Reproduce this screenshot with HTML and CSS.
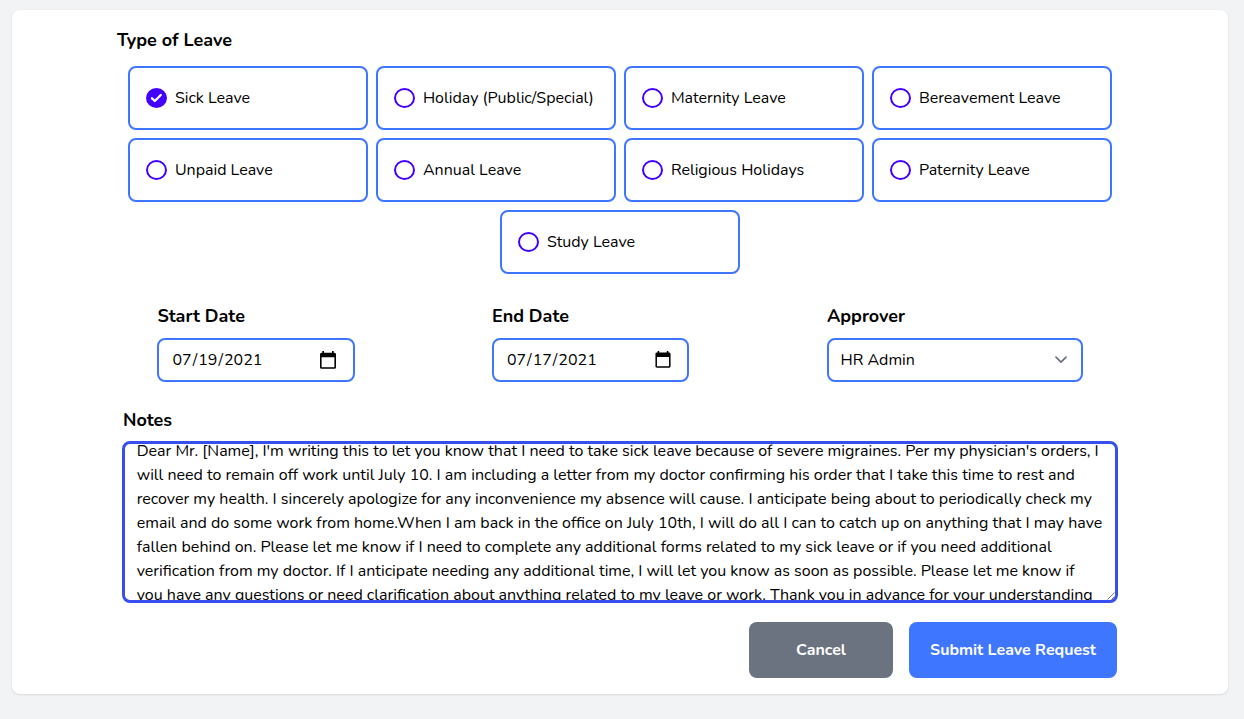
FILE: index.html
```html
<!DOCTYPE html>
<html lang="en">
<head>
<meta charset="utf-8">
<title>Leave Request</title>
<link rel="stylesheet" href="styles.css">
</head>
<body>
<main class="card">
  <h2 class="heading type-heading">Type of Leave</h2>
  <div class="options">
    <label class="option"><svg class="radio" viewBox="0 0 21 20"><ellipse cx="10.5" cy="10" rx="10.5" ry="10" fill="#4200ff"/><path d="M6 10.3l2.8 2.7 6-6" fill="none" stroke="#fff" stroke-width="2.3" stroke-linecap="round" stroke-linejoin="round"/></svg><span>Sick Leave</span></label>
    <label class="option"><svg class="radio" viewBox="0 0 21 20"><ellipse class="ring" cx="10.5" cy="10" rx="9.5" ry="9"/></svg><span>Holiday (Public/Special)</span></label>
    <label class="option"><svg class="radio" viewBox="0 0 21 20"><ellipse class="ring" cx="10.5" cy="10" rx="9.5" ry="9"/></svg><span>Maternity Leave</span></label>
    <label class="option"><svg class="radio" viewBox="0 0 21 20"><ellipse class="ring" cx="10.5" cy="10" rx="9.5" ry="9"/></svg><span>Bereavement Leave</span></label>
    <label class="option"><svg class="radio" viewBox="0 0 21 20"><ellipse class="ring" cx="10.5" cy="10" rx="9.5" ry="9"/></svg><span>Unpaid Leave</span></label>
    <label class="option"><svg class="radio" viewBox="0 0 21 20"><ellipse class="ring" cx="10.5" cy="10" rx="9.5" ry="9"/></svg><span>Annual Leave</span></label>
    <label class="option"><svg class="radio" viewBox="0 0 21 20"><ellipse class="ring" cx="10.5" cy="10" rx="9.5" ry="9"/></svg><span>Religious Holidays</span></label>
    <label class="option"><svg class="radio" viewBox="0 0 21 20"><ellipse class="ring" cx="10.5" cy="10" rx="9.5" ry="9"/></svg><span>Paternity Leave</span></label>
    <label class="option"><svg class="radio" viewBox="0 0 21 20"><ellipse class="ring" cx="10.5" cy="10" rx="9.5" ry="9"/></svg><span>Study Leave</span></label>
  </div>
  <div class="fields">
    <div class="field">
      <h2 class="heading">Start Date</h2>
      <div class="input date start"><span>07<i>/</i>19<i>/</i>2021</span><svg class="calendar" viewBox="0 0 16 18"><path fill-rule="evenodd" d="M2.3 0H4v1.7h8V0h1.7v1.7h.8Q16 1.7 16 3.2v13q0 1.5-1.5 1.5h-13Q0 17.7 0 16.2v-13Q0 1.7 1.5 1.7h.8zM1.6 6.3v9.9h12.8V6.3z"/></svg></div>
    </div>
    <div class="field">
      <h2 class="heading">End Date</h2>
      <div class="input date end"><span>07<i>/</i>17<i>/</i>2021</span><svg class="calendar" viewBox="0 0 16 18"><path fill-rule="evenodd" d="M2.3 0H4v1.7h8V0h1.7v1.7h.8Q16 1.7 16 3.2v13q0 1.5-1.5 1.5h-13Q0 17.7 0 16.2v-13Q0 1.7 1.5 1.7h.8zM1.6 6.3v9.9h12.8V6.3z"/></svg></div>
    </div>
    <div class="field">
      <h2 class="heading">Approver</h2>
      <div class="input select"><span>HR Admin</span><svg class="chevron" viewBox="0 0 12 8"><path d="M1 1.2l5 5 5-5" fill="none" stroke="#6b7280" stroke-width="1.7" stroke-linecap="round" stroke-linejoin="round"/></svg></div>
    </div>
  </div>
  <section class="notes">
    <h2 class="heading notes-heading">Notes</h2>
    <div class="textarea">
      <div class="lines">
        <p class="line">Dear Mr. [Name], I'm writing this to let you know that I need to take sick leave because of severe migraines. Per my physician's orders, I</p>
        <p class="line">will need to remain off work until July 10. I am including a letter from my doctor confirming his order that I take this time to rest and</p>
        <p class="line">recover my health. I sincerely apologize for any inconvenience my absence will cause. I anticipate being about to periodically check my</p>
        <p class="line">email and do some work from home.When I am back in the office on July 10th, I will do all I can to catch up on anything that I may have</p>
        <p class="line">fallen behind on. Please let me know if I need to complete any additional forms related to my sick leave or if you need additional</p>
        <p class="line">verification from my doctor. If I anticipate needing any additional time, I will let you know as soon as possible. Please let me know if</p>
        <p class="line">you have any questions or need clarification about anything related to my leave or work. Thank you in advance for your understanding</p>
      </div>
      <svg class="grip" viewBox="0 0 8 8"><path d="M.5 7.5l7-7M4.5 7.5l3-3" stroke="#555" stroke-width=".8" fill="none"/></svg>
    </div>
  </section>
  <div class="actions">
    <button class="button cancel">Cancel</button>
    <button class="button submit">Submit Leave Request</button>
  </div>
</main>
</body>
</html>
```
FILE: styles.css
```css
* { box-sizing: border-box; }
body {
  margin: 0;
  padding: 10px 16px 0 12px;
  height: 719px;
  overflow: hidden;
  background: #f2f3f5;
  color: #000;
  font: 16px/24px Nunito, Lato, sans-serif;
}
.card {
  height: 684px;
  padding-top: 16px;
  background: #fff;
  border-radius: 8px;
  box-shadow: 0 1px 3px rgba(0, 0, 0, .07), 0 1px 2px rgba(0, 0, 0, .04);
}
.heading { margin: 0; font-size: 18px; line-height: 28px; font-weight: 700; white-space: nowrap; }
.type-heading { padding-left: 105px; }
.options {
  display: flex;
  flex-wrap: wrap;
  justify-content: center;
  gap: 8px;
  width: 984px;
  margin: 12px 0 0 116px;
}
.option {
  display: flex;
  align-items: center;
  width: 240px;
  height: 64px;
  padding-left: 16px;
  border: 2px solid #3f76ff;
  border-radius: 8px;
  white-space: nowrap;
}
.option span { margin-left: 7.9px; }
.radio { width: 21px; height: 20px; }
.ring { fill: none; stroke: #4200ff; stroke-width: 2; }
.fields {
  display: grid;
  grid-template-columns: 334.5px 335px 256px;
  margin: 28px 0 0 145.4px;
}
.input {
  display: flex;
  align-items: center;
  justify-content: space-between;
  height: 44px;
  margin-top: 8px;
  border: 2px solid #3f76ff;
  border-radius: 8px;
}
.date { width: 197px; padding: 0 16px 0 13px; }
.date i { margin: 0 1px; font-style: normal; }
.start { width: 198px; margin-left: -.4px; padding: 0 17px 0 13.5px; }
.end .calendar { height: 17px; margin-top: -1px; }
.select { width: 256px; padding: 0 14px 0 11.6px; }
.calendar { width: 16px; height: 18px; }
.chevron { width: 12px; height: 8px; }
.notes { width: 996px; margin: 24px 0 0 110px; }
.notes-heading { padding-left: 1px; }
.textarea {
  position: relative;
  height: 162px;
  margin-top: 7px;
  padding-left: 11.7px;
  overflow: hidden;
  border: 3px solid #384fee;
  border-radius: 8px;
}
.lines { margin-top: -5px; }
.line { margin: 0; white-space: nowrap; }
.grip { position: absolute; right: 0; bottom: 0; width: 8px; height: 8px; }
.actions {
  display: flex;
  justify-content: flex-end;
  gap: 16px;
  padding: 19px 111px 0 0;
}
.button {
  height: 56px;
  padding: 0;
  border: 0;
  border-radius: 8px;
  color: #fff;
  font: 700 16px/24px Nunito, Lato, sans-serif;
}
.cancel { width: 144px; background: #6b7280; }
.submit { width: 208px; background: #3f76ff; }
```
